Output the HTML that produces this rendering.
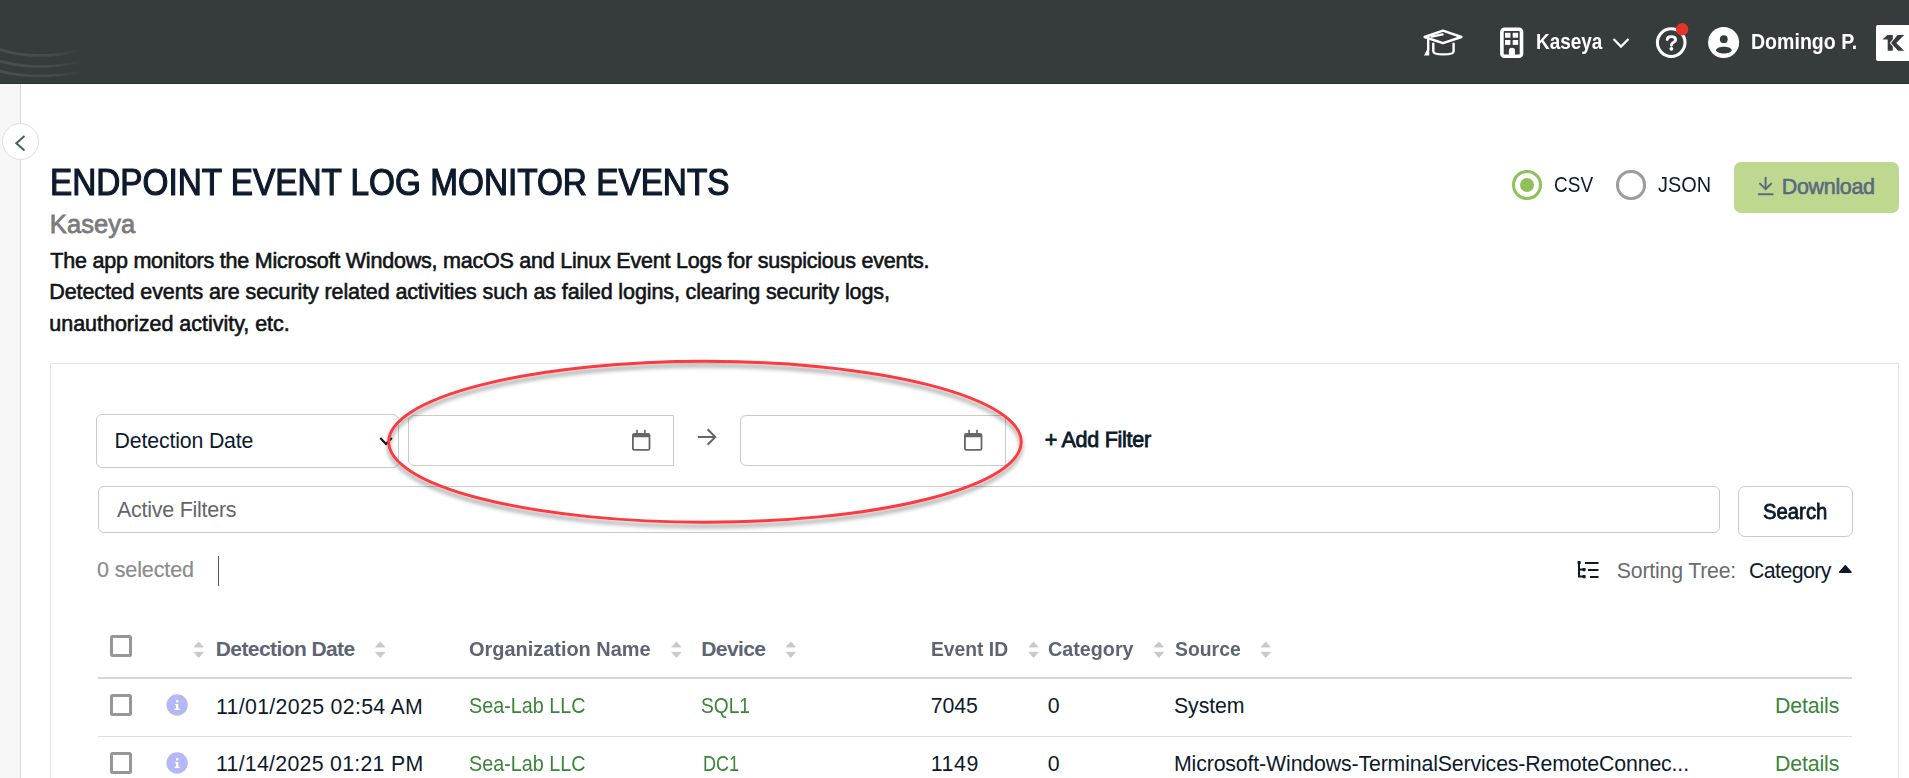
<!DOCTYPE html>
<html lang="en">
<head>
<meta charset="utf-8">
<title>Endpoint Event Log Monitor Events</title>
<style>
html,body{margin:0;padding:0;}
body{width:1909px;height:778px;overflow:hidden;position:relative;background:#ffffff;font-family:"Liberation Sans",sans-serif;}
.abs{position:absolute;box-sizing:border-box;}
.t{position:absolute;line-height:1;white-space:nowrap;font-family:"Liberation Sans",sans-serif;}
svg{position:absolute;overflow:visible;}
</style>
</head>
<body>
<!-- header -->
<div class="abs" style="left:0;top:0;width:1909px;height:84px;background:#363b3c;"></div>
<div class="abs" style="left:0;top:83px;width:1909px;height:1px;background:#2b3030;"></div>
<svg style="left:0;top:0" width="120" height="84" viewBox="0 0 120 84">
  <defs><linearGradient id="sw" x1="0" y1="0" x2="1" y2="0"><stop offset="0" stop-color="#4a4e4f" stop-opacity="1"/><stop offset="0.6" stop-color="#4a4e4f" stop-opacity="0.9"/><stop offset="1" stop-color="#4a4e4f" stop-opacity="0"/></linearGradient></defs>
  <g fill="none" stroke="url(#sw)" stroke-width="2.6">
    <path d="M-2 49 Q 35 61.5 82 50"/>
    <path d="M-2 60.6 Q 35 72 82 61.5"/>
    <path d="M-2 70.5 Q 35 81 82 71.5"/>
  </g>
</svg>
<!-- grad cap -->
<svg style="left:1418px;top:24px" width="50" height="36" viewBox="0 0 50 36">
  <g fill="none" stroke="#ffffff" stroke-width="2.4" stroke-linejoin="round" stroke-linecap="round">
    <path d="M6.6 13 L25 6.6 L43.4 13 L25 19.2 Z"/>
    <path d="M13.6 12.6 L24.6 10.4"/>
    <path d="M15.3 19.6 V27.2 Q15.3 30.4 25.5 30.4 Q35.6 30.4 35.6 27.2 V19.6"/>
    <path d="M10.2 15.2 V25.5"/>
  </g>
  <path d="M6 31.6 L11.2 31.6 L11.2 25 L9.4 25 Z" fill="#ffffff"/>
</svg>
<!-- building -->
<svg style="left:1495px;top:22px" width="35" height="40" viewBox="0 0 35 40">
  <rect x="6.9" y="7.2" width="19.6" height="27" rx="2.5" fill="none" stroke="#ffffff" stroke-width="3.6"/>
  <rect x="10" y="10.8" width="5.4" height="4.9" fill="#ffffff"/>
  <rect x="17.7" y="10.8" width="5.4" height="4.9" fill="#ffffff"/>
  <rect x="10" y="18" width="5.4" height="4.9" fill="#ffffff"/>
  <rect x="17.7" y="18" width="5.4" height="4.9" fill="#ffffff"/>
  <path d="M13.9 34 V28.7 A3.05 3.05 0 0 1 20 28.7 V34 Z" fill="#ffffff"/>
</svg>
<!-- header chevron -->
<svg style="left:1610px;top:35px" width="22" height="16" viewBox="0 0 22 16">
  <path d="M3.5 4 L11 11.6 L18.5 4" fill="none" stroke="#ffffff" stroke-width="2.2"/>
</svg>
<!-- help -->
<svg style="left:1650px;top:20px" width="45" height="45" viewBox="0 0 45 45">
  <circle cx="21.2" cy="22.6" r="13.8" fill="none" stroke="#ffffff" stroke-width="3"/>
  <path d="M17.2 19.6 Q17.2 16.6 21.4 16.6 Q25.6 16.6 25.6 19.6 Q25.6 21.5 23 22.7 Q21.4 23.5 21.4 25.2" fill="none" stroke="#ffffff" stroke-width="2.9" stroke-linecap="round"/>
  <circle cx="21.4" cy="28.8" r="1.9" fill="#ffffff"/>
  <circle cx="32.1" cy="9.3" r="6.2" fill="#e5332a"/>
</svg>
<!-- user -->
<svg style="left:1650px;top:20px" width="95" height="45" viewBox="0 0 95 45">
  <circle cx="73.6" cy="22.5" r="15.5" fill="#ffffff"/>
  <circle cx="73.8" cy="19.2" r="3.9" fill="#363b3c"/>
  <path d="M65.9 30.2 C 67.2 25.6, 80.6 25.6, 81.9 30.2 C 80 34.6, 67.8 34.6, 65.9 30.2 Z" fill="#363b3c"/>
</svg>
<!-- K logo box -->
<div class="abs" style="left:1876px;top:25px;width:40px;height:36px;background:#ffffff;border-radius:2px;"></div>
<svg style="left:1860px;top:18px" width="49" height="50" viewBox="1860 18 49 50">
  <path d="M1882.5 39.6 L1887.4 35 L1892.8 35 L1892.8 50.8 L1887.7 50.8 L1887.7 39.6 Z" fill="#363b3c"/>
  <path d="M1897.4 34.5 L1905.6 34.5 L1897 43 L1905.6 51.3 L1897.8 51.3 L1890.4 43 Z" fill="#363b3c" stroke="#ffffff" stroke-width="1.1" stroke-linejoin="miter"/>
</svg>

<!-- sidebar -->
<div class="abs" style="left:0;top:84px;width:21px;height:694px;background:#f7f7f7;border-right:1px solid #d9d9d9;"></div>
<div class="abs" style="left:2px;top:122.7px;width:37.2px;height:37.2px;border-radius:50%;background:#ffffff;border:1px solid #dedede;"></div>
<svg style="left:0;top:120px" width="40" height="40" viewBox="0 0 40 40">
  <path d="M24.5 16 L16.3 23.3 L24.5 30.6" fill="none" stroke="#4b5b70" stroke-width="2"/>
</svg>

<!-- radios -->
<div class="abs" style="left:1512px;top:170.2px;width:29.8px;height:29.8px;border-radius:50%;border:3px solid #8fc15b;"></div>
<div class="abs" style="left:1519.7px;top:177.9px;width:14.4px;height:14.4px;border-radius:50%;background:#8fc15b;"></div>
<div class="abs" style="left:1616.3px;top:170.2px;width:29.6px;height:29.6px;border-radius:50%;border:3px solid #9c9c9c;"></div>
<!-- download -->
<div class="abs" style="left:1734px;top:162px;width:165px;height:51px;border-radius:7px;background:#bed890;"></div>
<svg style="left:1750px;top:170px" width="30" height="30" viewBox="0 0 30 30">
  <g fill="none" stroke="#5b6a7d" stroke-width="2" stroke-linecap="round">
    <path d="M15.6 7.8 V19"/>
    <path d="M10 13.6 L15.6 19.2 L21.2 13.6"/>
    <path d="M8.8 24.3 H22.7"/>
  </g>
</svg>

<!-- card -->
<div class="abs" style="left:50px;top:363px;width:1849px;height:500px;border:1px solid #e4e4e4;"></div>

<!-- select -->
<div class="abs" style="left:96px;top:414px;width:303px;height:54px;border:1px solid #cacaca;border-radius:6px;"></div>
<svg style="left:370px;top:430px" width="30" height="22" viewBox="0 0 30 22">
  <path d="M10.3 8 L16 14 L21.8 8" fill="none" stroke="#0c1a2c" stroke-width="2.2"/>
</svg>
<!-- date inputs -->
<div class="abs" style="left:408px;top:415px;width:266px;height:51px;border:1px solid #cacaca;border-radius:6px 0 0 6px;"></div>
<div class="abs" style="left:740px;top:415px;width:266px;height:51px;border:1px solid #cacaca;border-radius:6px 0 0 6px;"></div>
<svg style="left:620px;top:420px" width="40" height="40" viewBox="0 0 40 40">
  <g fill="#666666">
    <path d="M14.2 13 H28.2 A2.2 2.2 0 0 1 30.4 15.2 V28.6 A2.2 2.2 0 0 1 28.2 30.8 H14.2 A2.2 2.2 0 0 1 12 28.6 V15.2 A2.2 2.2 0 0 1 14.2 13 Z M13.8 17.2 V28.4 A0.6 0.6 0 0 0 14.4 29 H28 A0.6 0.6 0 0 0 28.6 28.4 V17.2 Z"/>
    <rect x="16.2" y="9.8" width="1.6" height="4"/>
    <rect x="24.1" y="9.8" width="1.6" height="4"/>
  </g>
</svg>
<svg style="left:952px;top:420px" width="40" height="40" viewBox="0 0 40 40">
  <g fill="#666666">
    <path d="M14.2 13 H28.2 A2.2 2.2 0 0 1 30.4 15.2 V28.6 A2.2 2.2 0 0 1 28.2 30.8 H14.2 A2.2 2.2 0 0 1 12 28.6 V15.2 A2.2 2.2 0 0 1 14.2 13 Z M13.8 17.2 V28.4 A0.6 0.6 0 0 0 14.4 29 H28 A0.6 0.6 0 0 0 28.6 28.4 V17.2 Z"/>
    <rect x="16.2" y="9.8" width="1.6" height="4"/>
    <rect x="24.1" y="9.8" width="1.6" height="4"/>
  </g>
</svg>
<!-- arrow -->
<svg style="left:690px;top:420px" width="40" height="40" viewBox="0 0 40 40">
  <g fill="none" stroke="#666666" stroke-width="2">
    <path d="M7.8 17 H25"/>
    <path d="M17.6 9.3 L25.3 17 L17.6 24.7"/>
  </g>
</svg>

<!-- active filters + search -->
<div class="abs" style="left:98px;top:486px;width:1622px;height:47px;border:1px solid #cacaca;border-radius:6px;"></div>
<div class="abs" style="left:1738px;top:486px;width:115px;height:51px;border:1px solid #cacaca;border-radius:7px;"></div>

<!-- selected divider -->
<div class="abs" style="left:217.8px;top:556px;width:1.4px;height:30px;background:#4f5966;"></div>

<!-- sort tree icon -->
<svg style="left:1570px;top:555px" width="35" height="30" viewBox="0 0 35 30">
  <g fill="none" stroke="#0c1a2c" stroke-width="2">
    <path d="M9 7 V21.5 H15"/>
    <path d="M9 14.5 H15"/>
    <path d="M15 8 H28.5"/>
    <path d="M18 15 H28.5"/>
    <path d="M20 22 H28.5"/>
  </g>
  <g fill="#0c1a2c">
    <rect x="7.5" y="6" width="3.2" height="3.2" rx="0.8"/>
    <rect x="12.5" y="13" width="3.2" height="3.2" rx="0.8"/>
    <rect x="12.5" y="20" width="3.2" height="3.2" rx="0.8"/>
  </g>
</svg>
<!-- caret up -->
<svg style="left:1830px;top:558px" width="30" height="20" viewBox="0 0 30 20">
  <path d="M9.6 14.2 L15.3 7.9 L21 14.2 Z" fill="#0c1a2c" stroke="#0c1a2c" stroke-width="1.6" stroke-linejoin="round"/>
</svg>

<!-- table -->
<div class="abs" style="left:110px;top:635.2px;width:22px;height:21.6px;border:3px solid #979797;border-radius:2.5px;"></div>
<div class="abs" style="left:98px;top:677px;width:1754px;height:2px;background:#d7d7d7;"></div>
<div class="abs" style="left:98px;top:736px;width:1754px;height:1px;background:#dfdfdf;"></div>
<div class="abs" style="left:110px;top:694.2px;width:22px;height:21.6px;border:3px solid #979797;border-radius:2.5px;"></div>
<div class="abs" style="left:110px;top:752.2px;width:22px;height:21.6px;border:3px solid #979797;border-radius:2.5px;"></div>
<!-- info icons -->
<svg style="left:160px;top:688px" width="35" height="35" viewBox="0 0 35 35">
  <circle cx="17.1" cy="17" r="10.7" fill="#b4b9f6"/>
  <g fill="#ffffff"><rect x="16" y="12.2" width="2.4" height="2.2"/><path d="M15 15.9 H18.3 V20.6 H19.6 V22 H14.6 V20.6 H16 V17.3 H15 Z"/></g>
</svg>
<svg style="left:160px;top:746px" width="35" height="35" viewBox="0 0 35 35">
  <circle cx="17.1" cy="17" r="10.7" fill="#b4b9f6"/>
  <g fill="#ffffff"><rect x="16" y="12.2" width="2.4" height="2.2"/><path d="M15 15.9 H18.3 V20.6 H19.6 V22 H14.6 V20.6 H16 V17.3 H15 Z"/></g>
</svg>
<!-- sort icons -->
<svg style="left:0;top:0" width="1909" height="778" viewBox="0 0 1909 778">
  <g fill="#c9c9c9" stroke="#c9c9c9" stroke-width="0.9" stroke-linejoin="round">
    <path d="M194.1 647 L198.7 641.9 L203.3 647 Z M194.1 652.3 L198.7 657.4 L203.3 652.3 Z"/>
    <path d="M375.6 647 L380.2 641.9 L384.8 647 Z M375.6 652.3 L380.2 657.4 L384.8 652.3 Z"/>
    <path d="M671.8 647 L676.4 641.9 L681.0 647 Z M671.8 652.3 L676.4 657.4 L681.0 652.3 Z"/>
    <path d="M786.2 647 L790.8 641.9 L795.4 647 Z M786.2 652.3 L790.8 657.4 L795.4 652.3 Z"/>
    <path d="M1028.9 647 L1033.5 641.9 L1038.1 647 Z M1028.9 652.3 L1033.5 657.4 L1038.1 652.3 Z"/>
    <path d="M1154.3 647 L1158.9 641.9 L1163.5 647 Z M1154.3 652.3 L1158.9 657.4 L1163.5 652.3 Z"/>
    <path d="M1261.1 647 L1265.7 641.9 L1270.3 647 Z M1261.1 652.3 L1265.7 657.4 L1270.3 652.3 Z"/>
  </g>
</svg>

<div class="t" style="left:1536.1px;top:31.0px;font-size:22px;font-weight:700;color:#ffffff;transform:scaleX(0.8610);transform-origin:0 0;">Kaseya</div>
<div class="t" style="left:1751.1px;top:31.0px;font-size:22px;font-weight:700;color:#ffffff;transform:scaleX(0.8889);transform-origin:0 0;">Domingo P.</div>
<div class="t" style="left:50.4px;top:165.0px;font-size:36px;font-weight:400;color:#0c1a2c;transform:scaleX(0.9256);transform-origin:0 0;-webkit-text-stroke:1.2px #0c1a2c;">ENDPOINT EVENT LOG MONITOR EVENTS</div>
<div class="t" style="left:49.8px;top:212.0px;font-size:25.5px;font-weight:400;color:#7b7b7b;letter-spacing:0.08px;-webkit-text-stroke:0.8px #7b7b7b;">Kaseya</div>
<div class="t" style="left:50.3px;top:251.0px;font-size:21.5px;font-weight:400;color:#111417;letter-spacing:-0.22px;-webkit-text-stroke:0.6px #111417;">The app monitors the Microsoft Windows, macOS and Linux Event Logs for suspicious events.</div>
<div class="t" style="left:49.3px;top:282.0px;font-size:21.5px;font-weight:400;color:#111417;letter-spacing:-0.11px;-webkit-text-stroke:0.6px #111417;">Detected events are security related activities such as failed logins, clearing security logs,</div>
<div class="t" style="left:49.3px;top:314.0px;font-size:21.5px;font-weight:400;color:#111417;letter-spacing:-0.02px;-webkit-text-stroke:0.6px #111417;">unauthorized activity, etc.</div>
<div class="t" style="left:1553.9px;top:175.0px;font-size:21.5px;font-weight:400;color:#0c1a2c;transform:scaleX(0.8837);transform-origin:0 0;">CSV</div>
<div class="t" style="left:1658.4px;top:175.0px;font-size:21.5px;font-weight:400;color:#0c1a2c;transform:scaleX(0.9250);transform-origin:0 0;">JSON</div>
<div class="t" style="left:1781.8px;top:177.0px;font-size:21.5px;font-weight:400;color:#5b6a7d;letter-spacing:-0.34px;-webkit-text-stroke:0.6px #5b6a7d;">Download</div>
<div class="t" style="left:114.5px;top:431.0px;font-size:21.3px;font-weight:400;color:#0c1a2c;letter-spacing:-0.15px;">Detection Date</div>
<div class="t" style="left:1044.7px;top:430.0px;font-size:21.5px;font-weight:400;color:#0c1a2c;letter-spacing:-0.27px;-webkit-text-stroke:0.8px #0c1a2c;">+ Add Filter</div>
<div class="t" style="left:117.0px;top:500.0px;font-size:21.5px;font-weight:400;color:#646669;letter-spacing:-0.27px;">Active Filters</div>
<div class="t" style="left:1763.0px;top:502.0px;font-size:21.5px;font-weight:400;color:#0c1a2c;transform:scaleX(0.9441);transform-origin:0 0;-webkit-text-stroke:0.8px #0c1a2c;">Search</div>
<div class="t" style="left:97.0px;top:560.0px;font-size:21.5px;font-weight:400;color:#8b8b8b;letter-spacing:-0.11px;-webkit-text-stroke:0.2px #8b8b8b;">0 selected</div>
<div class="t" style="left:1616.8px;top:561.0px;font-size:21.3px;font-weight:400;color:#6a6c70;letter-spacing:-0.21px;">Sorting Tree:</div>
<div class="t" style="left:1749.0px;top:561.0px;font-size:21.3px;font-weight:400;color:#0c1a2c;letter-spacing:-0.57px;">Category</div>
<div class="t" style="left:215.8px;top:638.0px;font-size:21px;font-weight:700;color:#5d6573;letter-spacing:-0.59px;">Detection Date</div>
<div class="t" style="left:469.4px;top:638.0px;font-size:21px;font-weight:700;color:#5d6573;transform:scaleX(0.9489);transform-origin:0 0;">Organization Name</div>
<div class="t" style="left:701.3px;top:638.0px;font-size:21px;font-weight:700;color:#5d6573;letter-spacing:-0.60px;">Device</div>
<div class="t" style="left:930.8px;top:638.0px;font-size:21px;font-weight:700;color:#5d6573;transform:scaleX(0.9183);transform-origin:0 0;">Event ID</div>
<div class="t" style="left:1047.8px;top:638.0px;font-size:21px;font-weight:700;color:#5d6573;transform:scaleX(0.9400);transform-origin:0 0;">Category</div>
<div class="t" style="left:1175.0px;top:638.0px;font-size:21px;font-weight:700;color:#5d6573;transform:scaleX(0.9225);transform-origin:0 0;">Source</div>
<div class="t" style="left:216.0px;top:697.0px;font-size:21.3px;font-weight:400;color:#0c1a2c;letter-spacing:0.33px;">11/01/2025 02:54 AM</div>
<div class="t" style="left:469.4px;top:696.0px;font-size:21.3px;font-weight:400;color:#3a8538;transform:scaleX(0.9274);transform-origin:0 0;">Sea-Lab LLC</div>
<div class="t" style="left:701.4px;top:696.0px;font-size:21.3px;font-weight:400;color:#3a8538;transform:scaleX(0.9000);transform-origin:0 0;">SQL1</div>
<div class="t" style="left:930.7px;top:696.0px;font-size:21.3px;font-weight:400;color:#0c1a2c;letter-spacing:-0.07px;">7045</div>
<div class="t" style="left:1047.7px;top:696.0px;font-size:21.3px;font-weight:400;color:#0c1a2c;letter-spacing:0.00px;">0</div>
<div class="t" style="left:1174.0px;top:696.0px;font-size:21.3px;font-weight:400;color:#0c1a2c;letter-spacing:-0.10px;">System</div>
<div class="t" style="left:1775.0px;top:696.0px;font-size:21.3px;font-weight:400;color:#3a8538;letter-spacing:-0.13px;">Details</div>
<div class="t" style="left:216.0px;top:754.0px;font-size:21.3px;font-weight:400;color:#0c1a2c;letter-spacing:0.28px;">11/14/2025 01:21 PM</div>
<div class="t" style="left:469.4px;top:754.0px;font-size:21.3px;font-weight:400;color:#3a8538;transform:scaleX(0.9274);transform-origin:0 0;">Sea-Lab LLC</div>
<div class="t" style="left:702.5px;top:754.0px;font-size:21.3px;font-weight:400;color:#3a8538;transform:scaleX(0.8488);transform-origin:0 0;">DC1</div>
<div class="t" style="left:930.7px;top:754.0px;font-size:21.3px;font-weight:400;color:#0c1a2c;letter-spacing:0.60px;">1149</div>
<div class="t" style="left:1047.7px;top:754.0px;font-size:21.3px;font-weight:400;color:#0c1a2c;letter-spacing:0.00px;">0</div>
<div class="t" style="left:1174.0px;top:754.0px;font-size:21.3px;font-weight:400;color:#0c1a2c;letter-spacing:-0.14px;">Microsoft-Windows-TerminalServices-RemoteConnec...</div>
<div class="t" style="left:1775.0px;top:754.0px;font-size:21.3px;font-weight:400;color:#3a8538;letter-spacing:-0.13px;">Details</div>

<!-- annotation ellipse -->
<svg style="left:0;top:0" width="1909" height="778" viewBox="0 0 1909 778">
  <defs>
    <filter id="sh" x="-10%" y="-30%" width="120%" height="160%">
      <feGaussianBlur in="SourceAlpha" stdDeviation="2.1"/>
      <feOffset dx="0" dy="4.2" result="b"/>
      <feComponentTransfer><feFuncA type="linear" slope="0.42"/></feComponentTransfer>
      <feMerge><feMergeNode/><feMergeNode in="SourceGraphic"/></feMerge>
    </filter>
  </defs>
  <ellipse cx="705" cy="441.8" rx="316.3" ry="80.5" fill="none" stroke="#fc3a3f" stroke-width="2.9" filter="url(#sh)"/>
</svg>
</body>
</html>
